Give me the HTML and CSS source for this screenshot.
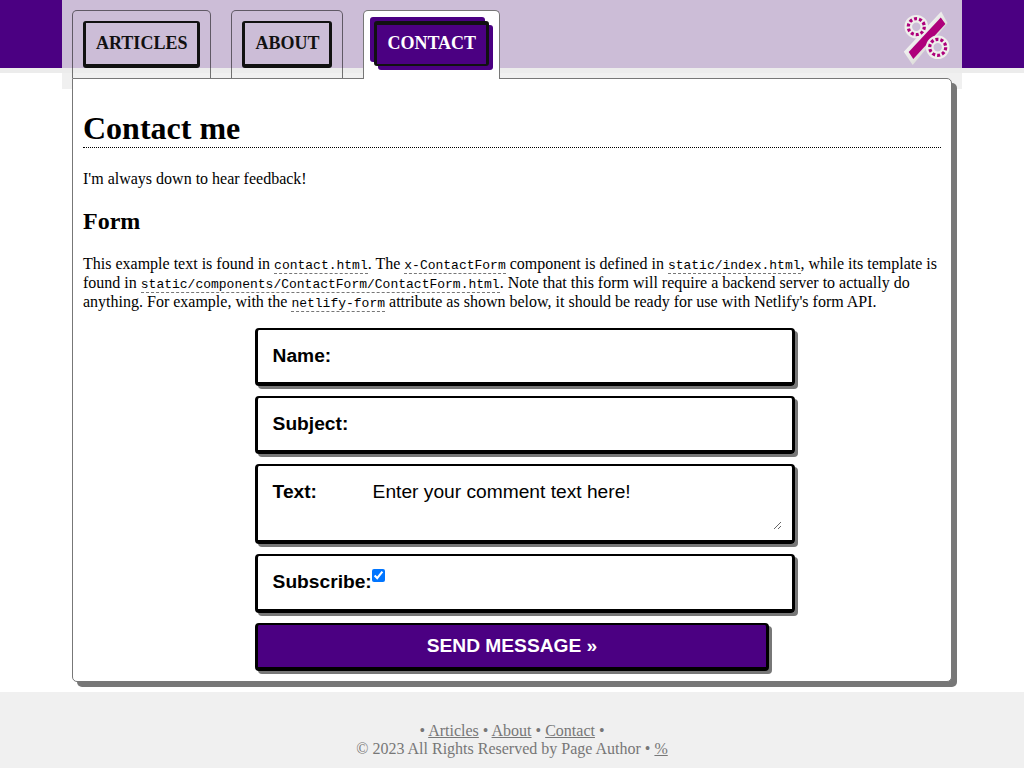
FILE: index.html
```html
<!DOCTYPE html>
<html lang="en">
<head>
<meta charset="utf-8">
<title>Contact me</title>
<link rel="stylesheet" href="styles.css">
</head>
<body>
<header class="header">
  <div class="header-inner">
    <nav class="tabs">
      <div class="tab"><a class="tab-link">ARTICLES</a></div>
      <div class="tab"><a class="tab-link">ABOUT</a></div>
      <div class="tab active"><a class="tab-link">CONTACT</a></div>
    </nav>
    <svg class="logo" width="48" height="58" viewBox="902 9 48 58">
      <defs>
        <linearGradient id="bevel" x1="0" y1="0" x2="1" y2="1">
          <stop offset="0.35" stop-color="#f3f3f3"/><stop offset="0.65" stop-color="#dcdcd8"/>
        </linearGradient>
      </defs>
      <path d="M941.2 11.5 L947.5 23 L912.7 65 L903.8 51.8 Z" fill="url(#bevel)"/>
      <circle class="halo" cx="916.3" cy="26.7" r="8"/>
      <path d="M940.8 17.5 L945.4 24 L913.3 59 L908.7 52 Z" fill="#ae007b"/>
      <circle class="halo" cx="937.7" cy="47.3" r="8"/>
      <circle class="ring" cx="916.3" cy="26.7" r="8"/>
      <circle class="ring" cx="937.7" cy="47.3" r="8"/>
    </svg>
  </div>
</header>
<main class="page">
  <h1>Contact me</h1>
  <p>I'm always down to hear feedback!</p>
  <h2>Form</h2>
  <p class="intro">This example text is found in <code>contact.html</code>. The <code>x-ContactForm</code> component is defined in <code>static/index.html</code>, while its template is found in <code>static/components/ContactForm/ContactForm.html</code>. Note that this form will require a backend server to actually do anything. For example, with the <code>netlify-form</code> attribute as shown below, it should be ready for use with Netlify's form API.</p>
  <form class="form">
    <label class="field"><span class="caption">Name:</span><input class="control" type="text"></label>
    <label class="field"><span class="caption">Subject:</span><input class="control" type="text"></label>
    <label class="field tall"><span class="caption">Text:</span><textarea class="control">Enter your comment text here!</textarea></label>
    <label class="field check"><span class="caption">Subscribe:</span><input class="box" type="checkbox" checked></label>
    <button class="send" type="button">SEND MESSAGE »</button>
  </form>
</main>
<footer class="footer">
  <div>• <a>Articles</a> • <a>About</a> • <a>Contact</a> •</div>
  <div>© 2023 All Rights Reserved by Page Author • <a>%</a></div>
</footer>
</body>
</html>
```
FILE: styles.css
```css
* { box-sizing: border-box; }
body { margin: 0; height: 768px; overflow: hidden; background: #fff; color: #000; font: 16px "Liberation Serif", serif; }
.header { height: 78px; background: linear-gradient(indigo 68px, #ececec 68px 73px, #fff 73px); }
.header-inner { width: 900px; height: 89px; margin: 0 auto; padding: 10px 10px 0; display: flex; justify-content: space-between; align-items: flex-start; background: linear-gradient(#ccbdd7 68px, #ececec 68px 73px, #f0f0f0 73px); }
.tabs { display: flex; gap: 20px; }
.tab { height: 68px; padding: 10px; border: 1px solid rgba(0, 0, 0, .53); border-bottom: 0; border-radius: 5px 5px 0 0; }
.tab-link { display: block; height: 47px; padding: 10px; border: solid #111; border-width: 2px 3px 4px; border-radius: 3px; color: #111; font-weight: bold; font-size: 18px; line-height: 21px; }
.tab.active { position: relative; z-index: 2; height: 69px; background: #fff; border-color: #777; }
.active .tab-link { height: 45px; padding-top: 8px; border-width: 4px 3px 2px; color: #fff; background: indigo; box-shadow: -4px -4px indigo, 4px 4px indigo; }
.logo { margin: -1px 2px 0 0; }
.halo { fill: none; stroke: #efefec; stroke-width: 7.6; }
.ring { fill: none; stroke: #ae007b; stroke-width: 3.2; stroke-dasharray: 3 2.027; }
.page { position: relative; z-index: 1; width: 880px; height: 604px; margin: 0 auto; padding: 10px; border: 1px solid #777; border-radius: 0 5px 5px 5px; background: #fff; box-shadow: 5px 5px #777; }
h1 { margin: 21px 0 22px; height: 38px; font-size: 32px; border-bottom: 1px dotted #000; }
h2 { margin: 20px 0 19px; font-size: 24px; }
p { margin: 0 0 16px; }
.intro { margin-bottom: 17px; line-height: 19px; }
code { font: 13px "Liberation Mono", monospace; border-bottom: 1px dashed #777; }
.form { width: 540px; margin-left: 172px; display: flex; flex-direction: column; gap: 10px; font: 19.2px "Liberation Sans", sans-serif; }
.field { display: flex; align-items: flex-start; height: 58px; padding: 15px 10px 0 14.6px; border: solid #000; border-width: 2px 3px 4px; border-radius: 4px; box-shadow: 3px 3px #777; }
.caption { width: 100px; font-weight: bold; line-height: 22px; }
.control { flex: 1; height: 25px; padding: 0; border: 0; background: none; outline: 0; font: inherit; line-height: 22px; }
.tall { height: 80px; }
.tall .control { height: 49px; overflow: hidden; }
.check { height: 59px; }
.check .caption { width: 99.4px; }
.box { width: 13px; height: 13px; margin: -2px 0 0; }
.send { width: 514px; height: 48px; padding: 0; border: solid #000; border-width: 2px 3px 4px; border-radius: 4px; background: indigo; color: #fff; font: bold 19.2px "Liberation Sans", sans-serif; box-shadow: 3px 3px #777; }
.footer { height: 76px; margin-top: 10px; padding-top: 30px; background: #f0f0f0; color: #777; text-align: center; line-height: 18px; }
.footer a { text-decoration: underline; }
```
